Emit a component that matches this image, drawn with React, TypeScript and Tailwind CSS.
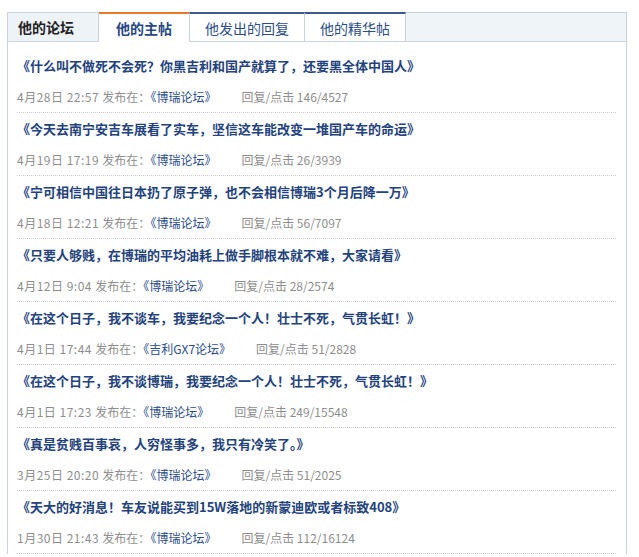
import React from "react";

type Post = {
  title: string;
  date: string;
  forum: string;
  stats: string;
};

const posts: Post[] = [
  {
    title: "《什么叫不做死不会死？你黑吉利和国产就算了，还要黑全体中国人》",
    date: "4月28日 22:57",
    forum: "博瑞论坛",
    stats: "146/4527",
  },
  {
    title: "《今天去南宁安吉车展看了实车，坚信这车能改变一堆国产车的命运》",
    date: "4月19日 17:19",
    forum: "博瑞论坛",
    stats: "26/3939",
  },
  {
    title: "《宁可相信中国往日本扔了原子弹，也不会相信博瑞3个月后降一万》",
    date: "4月18日 12:21",
    forum: "博瑞论坛",
    stats: "56/7097",
  },
  {
    title: "《只要人够贱，在博瑞的平均油耗上做手脚根本就不难，大家请看》",
    date: "4月12日 9:04",
    forum: "博瑞论坛",
    stats: "28/2574",
  },
  {
    title: "《在这个日子，我不谈车，我要纪念一个人！壮士不死，气贯长虹！》",
    date: "4月1日 17:44",
    forum: "吉利GX7论坛",
    stats: "51/2828",
  },
  {
    title: "《在这个日子，我不谈博瑞，我要纪念一个人！壮士不死，气贯长虹！》",
    date: "4月1日 17:23",
    forum: "博瑞论坛",
    stats: "249/15548",
  },
  {
    title: "《真是贫贱百事哀，人穷怪事多，我只有冷笑了。》",
    date: "3月25日 20:20",
    forum: "博瑞论坛",
    stats: "51/2025",
  },
  {
    title: "《天大的好消息！车友说能买到15W落地的新蒙迪欧或者标致408》",
    date: "1月30日 21:43",
    forum: "博瑞论坛",
    stats: "112/16124",
  },
];

const App = () => {
  return (
    <div className="min-h-screen bg-white pt-[12px] font-['Noto_Sans_CJK_SC',sans-serif]">
      <div className="ml-[7px] w-[620px] border-l border-r border-[#c9d3de]">
        {/* tabs */}
        <div className="flex h-[30px] text-[14px]">
          <div className="w-[91px] border-t border-b border-r border-[#c9d3de] bg-[#eef3f8] pl-[10px] leading-[28px] font-bold text-[#222]">
            他的论坛
          </div>
          <div className="w-[90px] border-t-2 border-[#e8762b] bg-white text-center leading-[28px] font-bold text-[#264784]">
            他的主帖
          </div>
          <div className="w-[116px] border-t-2 border-b border-l border-r border-[#c9d3de] border-t-[#3b5a8f] bg-white text-center leading-[28px] text-[#2c4d89]">
            他发出的回复
          </div>
          <div className="w-[101px] border-t-2 border-b border-r border-[#c9d3de] border-t-[#3b5a8f] bg-white text-center leading-[28px] text-[#2c4d89]">
            他的精华帖
          </div>
          <div className="flex-1 border-t border-b border-[#c9d3de] bg-[#eff4f8]" />
        </div>

        {/* posts */}
        <div className="pl-[9px] pr-[10px] pt-[8px]">
          {posts.map((p, i) => (
            <div
              key={i}
              className="border-b border-dotted border-[#cccccc] pt-[6px] pb-[5px]"
            >
              <div className="text-[13px] leading-[20px] font-bold text-[#24427c] whitespace-nowrap">
                {p.title}
              </div>
              <div className="mt-[11px] text-[12px] leading-[20px] text-[#8e8e8e] whitespace-nowrap">
                <span className="tracking-[0.5px]">{p.date} </span>
                发布在：
                <span className="text-[#2a4b87]">《{p.forum}》</span>
                <span className="ml-[25px]">回复/点击 {p.stats}</span>
              </div>
            </div>
          ))}
        </div>
      </div>
    </div>
  );
};

export default App;
